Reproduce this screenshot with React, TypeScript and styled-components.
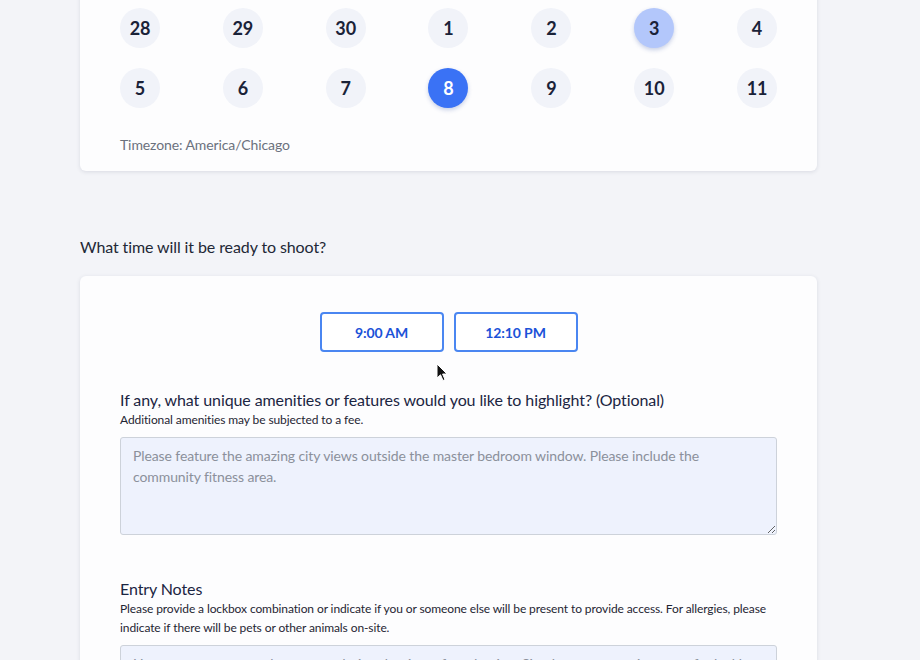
import styled, { createGlobalStyle } from "styled-components";

const GlobalStyle = createGlobalStyle`
  html, body {
    margin: 0;
    padding: 0;
    background: #f3f4f8;
    font-family: Lato, "Noto Sans", sans-serif;
    color: #1c2437;
    letter-spacing: -0.1px;
  }
  body {
    overflow: hidden;
  }
`;

const Page = styled.div`
  position: relative;
  width: 737px;
  margin-left: 80px;
  margin-top: -14px;
`;

const Card = styled.div`
  background: #fdfdfe;
  border-radius: 6px;
  box-shadow: 0 1px 4px rgba(30, 40, 70, 0.12);
  padding: 0 40px;
`;

const CalendarCard = styled(Card)`
  padding-top: 22px;
  padding-bottom: 16px;
`;

const Week = styled.div`
  display: flex;
  justify-content: space-between;
  margin-bottom: 20px;
`;

const Day = styled.div<{ $state?: "soft" | "active" }>`
  width: 40px;
  height: 40px;
  border-radius: 50%;
  display: flex;
  align-items: center;
  justify-content: center;
  font-size: 18px;
  font-weight: 700;
  background: ${(p) =>
    p.$state === "active" ? "#3a72f5" : p.$state === "soft" ? "#b3c7fb" : "#f1f3f9"};
  color: ${(p) => (p.$state === "active" ? "#ffffff" : "#1a2238")};
  box-shadow: ${(p) => (p.$state ? "0 2px 4px rgba(40, 70, 160, 0.25)" : "none")};
`;

const Timezone = styled.div`
  margin-top: 27px;
  font-size: 14px;
  color: #6b717d;
  line-height: 20px;
`;

const Question = styled.div`
  margin-top: 66px;
  margin-bottom: 19px;
  font-size: 16px;
  line-height: 20px;
  color: #222836;
`;

const FormCard = styled(Card)`
  padding-top: 36px;
  padding-bottom: 40px;
`;

const Slots = styled.div`
  display: flex;
  justify-content: center;
  gap: 10px;
  margin-bottom: 37px;
`;

const Slot = styled.button`
  width: 124px;
  height: 40px;
  border: 2px solid #4a86f1;
  border-radius: 4px;
  background: #ffffff;
  color: #1c52d8;
  font-family: Lato, "Noto Sans", sans-serif;
  font-size: 14px;
  font-weight: 700;
  letter-spacing: -0.1px;
  cursor: pointer;
`;

const Field = styled.div`
  margin-bottom: 43px;
`;

const Label = styled.div`
  font-size: 16px;
  line-height: 21px;
  color: #1b2542;
`;

const Hint = styled.div`
  font-size: 12px;
  line-height: 19px;
  color: #1f2533;
  margin-bottom: 8px;
`;

const Notes = styled.textarea`
  display: block;
  box-sizing: border-box;
  width: 100%;
  height: 98px;
  padding: 7px 12px;
  border: 1px solid #cdd2da;
  border-radius: 3px;
  background: #eef2fd;
  font-family: Lato, "Noto Sans", sans-serif;
  font-size: 14px;
  line-height: 21px;
  letter-spacing: -0.1px;
  color: #1c2437;
  resize: vertical;
  &::placeholder {
    color: #8b909b;
  }
`;

const Pointer = styled.svg`
  position: absolute;
  left: 356px;
  top: 377px;
`;

const weeks = [
  [28, 29, 30, 1, 2, 3, 4],
  [5, 6, 7, 8, 9, 10, 11],
];

export default function App() {
  return (
    <>
      <GlobalStyle />
      <Page>
        <CalendarCard>
          {weeks.map((week, i) => (
            <Week key={i}>
              {week.map((d) => (
                <Day
                  key={d}
                  $state={i === 0 && d === 3 ? "soft" : i === 1 && d === 8 ? "active" : undefined}
                >
                  {d}
                </Day>
              ))}
            </Week>
          ))}
          <Timezone>Timezone: America/Chicago</Timezone>
        </CalendarCard>

        <Question>What time will it be ready to shoot?</Question>

        <FormCard>
          <Slots>
            <Slot>9:00 AM</Slot>
            <Slot>12:10 PM</Slot>
          </Slots>

          <Field>
            <Label>If any, what unique amenities or features would you like to highlight? (Optional)</Label>
            <Hint>Additional amenities may be subjected to a fee.</Hint>
            <Notes placeholder="Please feature the amazing city views outside the master bedroom window. Please include the community fitness area." />
          </Field>

          <Field>
            <Label>Entry Notes</Label>
            <Hint>
              Please provide a lockbox combination or indicate if you or someone else will be present to
              provide access. For allergies, please indicate if there will be pets or other animals on-site.
            </Hint>
            <Notes placeholder="Homeowners may not be present during the time of production. Simultaneous appointments for lockbox access may occur." />
          </Field>
        </FormCard>

        <Pointer width="12" height="19" viewBox="0 0 12 19">
          <path d="M1 1 L1 15 L4.5 11.8 L7 17.5 L9 16.6 L6.6 11 L11 11 Z" fill="#111" stroke="#fff" strokeWidth="1" />
        </Pointer>
      </Page>
    </>
  );
}
